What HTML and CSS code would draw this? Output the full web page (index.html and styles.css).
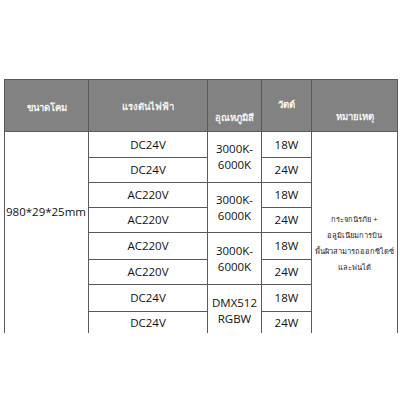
FILE: index.html
```html
<!DOCTYPE html>
<html lang="th">
<head>
<meta charset="utf-8">
<link rel="stylesheet" href="styles.css">
</head>
<body>
<div class="spec">
  <div class="hd h1">ขนาดโคม</div>
  <div class="hd h2">แรงดันไฟฟ้า</div>
  <div class="hd h3">อุณหภูมิสี</div>
  <div class="hd h4">วัตต์</div>
  <div class="hd h5">หมายเหตุ</div>

  <div class="cell size">980*29*25mm</div>

  <div class="cell v r1">DC24V</div>
  <div class="cell v r2">DC24V</div>
  <div class="cell v r3">AC220V</div>
  <div class="cell v r4">AC220V</div>
  <div class="cell v r5">AC220V</div>
  <div class="cell v r6">AC220V</div>
  <div class="cell v r7">DC24V</div>
  <div class="cell v r8">DC24V</div>

  <div class="cell t t1">3000K-<br>6000K</div>
  <div class="cell t t2">3000K-<br>6000K</div>
  <div class="cell t t3">3000K-<br>6000K</div>
  <div class="cell t t4">DMX512<br>RGBW</div>

  <div class="cell w r1">18W</div>
  <div class="cell w r2">24W</div>
  <div class="cell w r3">18W</div>
  <div class="cell w r4">24W</div>
  <div class="cell w r5">18W</div>
  <div class="cell w r6">24W</div>
  <div class="cell w r7">18W</div>
  <div class="cell w r8">24W</div>

  <div class="cell note">กระจกนิรภัย +<br>อลูมิเนียมการบิน<br>พื้นผิวสามารถออกซิไดซ์<br>และพ่นได้</div>
</div>
</body>
</html>
```

FILE: styles.css
```css
html, body {
  margin: 0;
  padding: 0;
  background: #ffffff;
}
body {
  padding: 79px 0 0 4px;
  font-family: "Open Sans", "Noto Sans", "DejaVu Sans", sans-serif;
}
.spec {
  width: 394px;
  box-sizing: border-box;
  display: grid;
  grid-template-columns: 83px 118px 53px 49px 85px;
  grid-template-rows: 51px 25px 24px 24px 24px 26px 24px 26px 21px;
  gap: 1px;
  padding: 1px 1px 0 1px;
  background: #5a5a5a;
}
.hd {
  background: #828282;
  color: #f4f4f4;
  font-size: 9.5px;
  font-weight: bold;
  display: flex;
  justify-content: center;
  align-items: center;
  text-align: center;
}
.h1 { grid-column: 1; grid-row: 1; padding-top: 4px; }
.h2 { grid-column: 2; grid-row: 1; padding-top: 2px; }
.h3 { grid-column: 3; grid-row: 1; padding-top: 24px; }
.h4 { grid-column: 4; grid-row: 1; padding-bottom: 2px; }
.h5 { grid-column: 5; grid-row: 1; padding-top: 22px; }

.cell {
  background: #ffffff;
  color: #111111;
  font-size: 11.5px;
  display: flex;
  justify-content: center;
  align-items: center;
  text-align: center;
  line-height: 16px;
}
.size {
  grid-column: 1;
  grid-row: 2 / span 8;
  align-items: flex-start;
  padding-top: 72px;
  justify-content: flex-start;
  padding-left: 1px;
}
.v { grid-column: 2; }
.w { grid-column: 4; }
.r1 { grid-row: 2; }
.r2 { grid-row: 3; }
.r3 { grid-row: 4; }
.r4 { grid-row: 5; }
.r5 { grid-row: 6; }
.r6 { grid-row: 7; }
.r7 { grid-row: 8; }
.r8 { grid-row: 9; }
.t { grid-column: 3; }
.t1 { grid-row: 2 / span 2; }
.t2 { grid-row: 4 / span 2; }
.t3 { grid-row: 6 / span 2; }
.t4 { grid-row: 8 / span 2; padding-top: 4px; }
.note {
  grid-column: 5;
  grid-row: 2 / span 8;
  font-size: 7.5px;
  line-height: 16px;
  padding-top: 20px;
  white-space: nowrap;
  color: #222222;
}
```
